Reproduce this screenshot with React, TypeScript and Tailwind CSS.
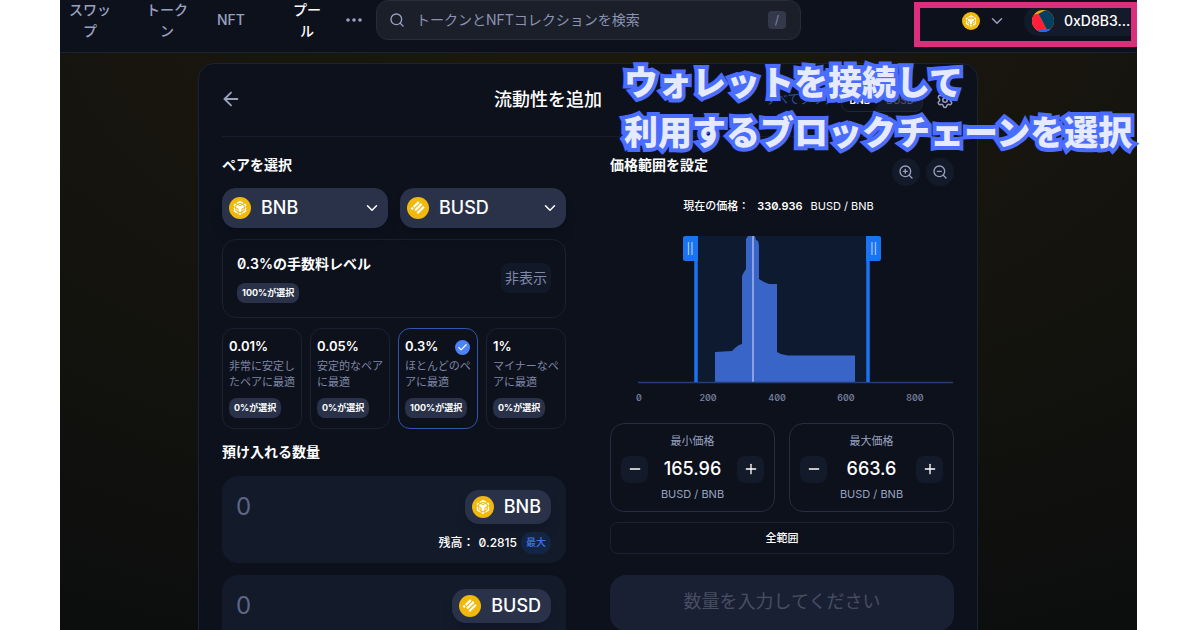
import type { ReactNode } from "react";
import { ArrowLeft, Check, ChevronDown, Minus, Plus, Search, Settings, ZoomIn, ZoomOut } from "lucide-react";

type Token = "BNB" | "BUSD";

const feeTiers = [
  { rate: "0.01%", note: "非常に安定したペアに最適", share: "0%が選択", selected: false },
  { rate: "0.05%", note: "安定的なペアに最適", share: "0%が選択", selected: false },
  { rate: "0.3%", note: "ほとんどのペアに最適", share: "100%が選択", selected: true },
  { rate: "1%", note: "マイナーなペアに最適", share: "0%が選択", selected: false },
];

function TokenIcon({ token, className }: { token: Token; className: string }) {
  return (
    <svg viewBox="0 0 24 24" className={className} aria-hidden="true">
      <circle cx="12" cy="12" r="12" fill="#f0b90b" />
      {token === "BNB" ? (
        <path
          transform="translate(4.2 4.2) scale(0.65)"
          fill="#fff"
          d="M5.631 3.676 12.001 0l6.367 3.676-2.34 1.358L12 2.716 7.972 5.034l-2.34-1.358Zm12.737 4.636-2.34-1.358L12 9.272 7.972 6.954l-2.34 1.358v2.716l4.026 2.318v4.636L12 19.341l2.341-1.359v-4.636l4.027-2.318V8.312Zm0 7.352v-2.716l-2.34 1.358v2.716l2.34-1.358Zm1.663.96-4.027 2.318v2.717l6.368-3.677V10.63l-2.34 1.358v4.636Zm-2.34-10.63 2.34 1.358v2.716l2.341-1.358V5.994l-2.34-1.358-2.342 1.358ZM9.657 19.926v2.716L12 24l2.341-1.358v-2.716l-2.34 1.358-2.342-1.358Zm-4.027-4.262 2.341 1.358v-2.716l-2.34-1.358v2.716Zm4.027-9.67L12 7.352l2.341-1.358L12 4.636 9.658 5.994Zm-5.69 1.358L6.31 5.994 3.968 4.636l-2.34 1.358V8.71l2.34 1.358V7.352Zm0 4.636L1.627 10.63v7.352l6.368 3.677v-2.717L3.969 16.624v-4.636Z"
        />
      ) : (
        <g stroke="#fff" strokeWidth="2.4">
          <path d="M7.200 11 12.900 5.400M8.700 14.700l7.300-7.200M11.200 17.800l7.300-7.200" />
          <path d="M4.800 11.600l1.700 1.700" />
        </g>
      )}
    </svg>
  );
}

function Badge({ children }: { children: ReactNode }) {
  return (
    <span className="inline-block rounded-lg bg-[#293249] px-[5px] text-[9px] leading-5 font-bold whitespace-nowrap text-white">
      {children}
    </span>
  );
}

function TokenSelect({ token, label }: { token: Token; label: string }) {
  return (
    <label className="flex h-10 min-w-0 flex-1 items-center rounded-[14px] bg-[#293249] pr-[6px] pl-[7px] shadow-lg">
      <TokenIcon token={token} className="mr-[10px] size-[22px] shrink-0" />
      <select
        aria-label={label}
        defaultValue={token}
        className="min-w-0 flex-1 appearance-none bg-transparent text-lg font-medium text-white outline-none"
      >
        <option>BNB</option>
        <option>BUSD</option>
      </select>
      <ChevronDown className="mr-[1px] size-[18px] shrink-0 text-white" strokeWidth={2} />
    </label>
  );
}

function DepositBox({ token, balance }: { token: Token; balance: string }) {
  return (
    <div className="h-[87px] rounded-2xl bg-[#131a2a] pt-[14px] pr-[15px] pl-[14px]">
      <div className="flex items-center justify-between">
        <input
          aria-label={`${token}の数量`}
          placeholder="0"
          className="w-32 bg-transparent text-2xl font-normal text-white outline-none placeholder:text-[#5d6785]"
        />
        <button className="flex h-[34px] items-center rounded-[14px] bg-[#293249] pr-[10px] pl-[7px] text-lg font-medium text-white shadow-lg">
          <TokenIcon token={token} className="mr-[10px] size-[22px]" />
          {token}
        </button>
      </div>
      <div className="mt-2 flex items-center justify-end text-xs font-medium text-white">
        <span className="mr-1">残高：</span>
        <span className="mr-1 slashed-zero">{balance}</span>
        <button className="h-[22px] rounded-[11px] bg-[#122644] px-[5px] text-[10px] font-medium text-[#3f72e4]">最大</button>
      </div>
    </div>
  );
}

function PriceBox({ title, value }: { title: string; value: string }) {
  const step = "flex size-[27px] items-center justify-center rounded-lg bg-[#131a2a] text-white";
  return (
    <div className="flex h-[89px] flex-1 flex-col rounded-[14px] border border-[#262c42] px-[10px] pt-[9px] text-center text-[11px] leading-4 text-[#98a1c0]">
      <span>{title}</span>
      <div className="mt-[6px] mb-[3px] flex items-center justify-between">
        <button aria-label={`${title}を下げる`} className={step}>
          <Minus className="size-4" strokeWidth={2} />
        </button>
        <input
          aria-label={title}
          defaultValue={value}
          className="w-20 bg-transparent text-center text-lg font-medium text-white outline-none"
        />
        <button aria-label={`${title}を上げる`} className={step}>
          <Plus className="size-4" strokeWidth={2} />
        </button>
      </div>
      <span>BUSD / BNB</span>
    </div>
  );
}

function LiquidityChart() {
  const ticks = [
    { x: 1, label: "0" },
    { x: 70, label: "200" },
    { x: 139, label: "400" },
    { x: 208, label: "600" },
    { x: 277, label: "800" },
  ];
  return (
    <svg viewBox="0 0 316 170" className="ml-auto block w-[316px] overflow-visible" role="img" aria-label="流動性の分布">
      <rect x="58" y="0" width="172" height="146" fill="#0e1a30" />
      <path
        d="M77 146V116L94 115 97 112 101 109 104 108V40L106 36 108 33V3L110 0H117L118 4 120 5 121 9V43L126 46 131 48H139V116L143 118 150 119.5H217V146Z"
        fill="#3965c8"
      />
      <path d="M115 0V146" stroke="#8aa2e0" strokeWidth="2" />
      <path d="M0 146.500H315" stroke="#233f7a" strokeWidth="1.5" />
      <path d="M58 0V146M230 0V146" stroke="#1a73f0" strokeWidth="3.5" />
      <path d="M47 0H60V25H47Q45 25 45 23V2Q45 0 47 0ZM228 0H241Q243 0 243 2V23Q243 25 241 25H228Z" fill="#1a73f0" />
      <path d="M50.500 6V19M54 6V19M234 6V19M237.500 6V19" stroke="#9cc1fa" strokeWidth="1.3" />
      {ticks.map((t) => (
        <text key={t.label} x={t.x} y="165" textAnchor="middle" className="fill-[#7c85a3] text-[9px] font-medium slashed-zero">
          {t.label}
        </text>
      ))}
    </svg>
  );
}

function Header() {
  const item = "shrink-0 text-center";
  return (
    <header className="relative flex h-[53px] items-center overflow-hidden border-b border-[#1b2236] bg-[#0d111c] pb-[13px] pl-[9px]">
      <nav className="flex items-center text-sm leading-[21px] font-medium text-[#98a1c0]">
        <a href="#swap" className={`${item} mr-[35px] w-[42px]`}>スワップ</a>
        <a href="#tokens" className={`${item} mr-[22px] w-[42px]`}>トークン</a>
        <a href="#nft" className={`${item} mr-[41px] w-[42px]`}>NFT</a>
        <a href="#pool" className={`${item} mr-[25px] w-7 text-white`}>プール</a>
        <button aria-label="その他" className="mr-[14px]">
          <svg viewBox="0 0 16 4" className="w-4" fill="currentColor">
            <circle cx="2" cy="2" r="1.8" />
            <circle cx="8" cy="2" r="1.8" />
            <circle cx="14" cy="2" r="1.8" />
          </svg>
        </button>
      </nav>
      <label className="flex h-10 w-[425px] items-center rounded-xl border border-[#262c3a] bg-[#1b1f2a] pr-[14px] pl-3">
        <Search className="mr-[11px] size-4 shrink-0 text-[#98a1c0]" strokeWidth={2} />
        <input
          aria-label="検索"
          placeholder="トークンとNFTコレクションを検索"
          className="min-w-0 flex-1 bg-transparent text-sm text-white outline-none placeholder:text-[#8a93b2]"
        />
        <kbd className="flex h-[18px] w-[18px] items-center justify-center rounded bg-[#33384a] font-[inherit] text-xs text-[#7f88a6]">/</kbd>
      </label>
      <div className="ml-auto flex items-center pt-[2px]">
        <button aria-label="チェーンを選択" className="mr-[18px] flex items-center gap-2 text-[#98a1c0]">
          <TokenIcon token="BNB" className="size-[18px]" />
          <ChevronDown className="size-[18px]" strokeWidth={2} />
        </button>
        <button className="flex h-[30px] w-[113px] items-center gap-[10px] rounded-l-full bg-[#131a2a] pl-[8px] text-sm font-medium text-white">
          <svg viewBox="0 0 22 22" className="size-[22px] rounded-full">
            <rect width="22" height="22" fill="#f5a60b" />
            <path d="M0 5 6.500 3.800 15 20V22H0Z" fill="#ff1f3a" />
            <path d="M6.500 3.800 14 0H22V18L15 20Z" fill="#033f5e" />
            <path d="M5 20.500 22 18.500V22H5Z" fill="#1d6cf0" />
          </svg>
          0xD8B3...
        </button>
      </div>
      <div className="pointer-events-none absolute top-[2px] right-0 h-[45px] w-[223px] border-[6px] border-[#db2f7e]" />
    </header>
  );
}

export default function App() {
  return (
    <div className="h-screen overflow-hidden bg-white pr-[63px] pl-[60px] font-['Inter','Noto_Sans_CJK_JP',sans-serif]">
      <div className="relative flex h-full flex-col bg-[radial-gradient(ellipse_110%_110%_at_top,#1d190d_0%,#15140e_50%,#0c0e0e_100%)]">
        <Header />
        <main className="min-h-0 flex-1 overflow-hidden pt-[10px] pr-[159px] pl-[138px]">
          <section className="rounded-2xl border border-[#1c2232] bg-[#0d111c] px-[23px] pb-10">
            <div className="flex h-[73px] items-center border-b border-[#161c2b]">
              <div className="flex flex-1 pb-[3px]">
                <button aria-label="戻る" className="-ml-[2px] text-[#98a1c0]">
                  <ArrowLeft className="size-[22px]" strokeWidth={2} />
                </button>
              </div>
              <h1 className="text-lg font-medium text-white">流動性を追加</h1>
              <div className="flex flex-1 items-center justify-end pl-20 whitespace-nowrap">
                <button className="mr-[5px] text-xs text-[#2453a4]">すべてクリア</button>
                <div className="mr-[13px] flex h-6 items-center rounded-lg border border-[#1e263a] bg-[#131a2a] text-[10px]">
                  <button className="h-full rounded-lg bg-[#0d111c] px-2 font-semibold text-white">BNB</button>
                  <button className="px-2 font-medium text-[#4a5470]">BUSD</button>
                </div>
                <button aria-label="設定" className="text-[#98a1c0]">
                  <Settings className="size-[18px]" strokeWidth={2} />
                </button>
              </div>
            </div>

            <div className="grid grid-cols-2 gap-11 pt-[17px]">
              <div>
                <h2 className="text-sm leading-[22px] font-bold text-white">ペアを選択</h2>
                <div className="mt-[12px] flex gap-3">
                  <TokenSelect token="BNB" label="トークン1" />
                  <TokenSelect token="BUSD" label="トークン2" />
                </div>

                <div className="mt-[11px] flex h-[79px] items-center justify-between rounded-[14px] border border-[#1b2133] px-[14px] pb-[2px]">
                  <div>
                    <p className="mb-2 text-sm leading-[22px] font-semibold text-white slashed-zero">0.3%の手数料レベル</p>
                    <div className="flex">
                      <Badge>100%が選択</Badge>
                    </div>
                  </div>
                  <button className="h-[30px] rounded-lg bg-[#111827] px-1 text-sm text-[#8089a8]">非表示</button>
                </div>

                <div className="mt-[10px] grid grid-cols-4 gap-2">
                  {feeTiers.map((tier) => (
                    <button
                      key={tier.rate}
                      aria-pressed={tier.selected}
                      className={`flex h-[101px] flex-col items-start rounded-xl border pt-[9px] pr-1 pl-1.5 text-left ${
                        tier.selected ? "border-[#2f56ab]" : "border-[#1b2133]"
                      }`}
                    >
                      <span className="flex h-[18px] w-full items-center justify-between pr-[3px] text-[13px] font-semibold text-white">
                        {tier.rate}
                        {tier.selected && (
                          <span className="flex size-[15px] items-center justify-center rounded-full bg-[#4c82fb]">
                            <Check className="size-[11px]" strokeWidth={2.5} />
                          </span>
                        )}
                      </span>
                      <span className="mt-[2px] mb-2 text-[11px] leading-4 text-[#7d86a5]">{tier.note}</span>
                      <Badge>{tier.share}</Badge>
                    </button>
                  ))}
                </div>

                <h2 className="mt-[12px] mb-[13px] text-sm leading-[22px] font-bold text-white">預け入れる数量</h2>
                <div className="flex flex-col gap-3">
                  <DepositBox token="BNB" balance="0.2815" />
                  <DepositBox token="BUSD" balance="0" />
                </div>
              </div>

              <div>
                <div className="flex h-[34px] items-start justify-between">
                  <h2 className="text-sm leading-[22px] font-bold text-white">価格範囲を設定</h2>
                  <div className="flex gap-[6px] pt-[4px]">
                    <button aria-label="拡大" className="flex size-7 items-center justify-center rounded-full bg-[#131a2a] text-[#98a1c0]">
                      <ZoomIn className="size-4" strokeWidth={2} />
                    </button>
                    <button aria-label="縮小" className="flex size-7 items-center justify-center rounded-full bg-[#131a2a] text-[#98a1c0]">
                      <ZoomOut className="size-4" strokeWidth={2} />
                    </button>
                  </div>
                </div>
                <p className="mt-[10px] flex justify-center pr-[7px] text-[11px] leading-4 font-medium text-white">
                  <span>現在の価格：</span>
                  <span className="mx-2 font-semibold slashed-zero">330.936</span>
                  <span className="font-normal">BUSD / BNB</span>
                </p>
                <div className="mt-[22px]">
                  <LiquidityChart />
                </div>
                <div className="mt-[17px] flex gap-[14px]">
                  <PriceBox title="最小価格" value="165.96" />
                  <PriceBox title="最大価格" value="663.6" />
                </div>
                <button className="mt-[10px] h-8 w-full rounded-lg border border-[#1b2133] text-[11px] font-medium text-white">全範囲</button>
                <button disabled className="mt-[21px] h-14 w-full rounded-2xl bg-[#1a2033] pb-[2px] text-lg text-[#484e62]">
                  数量を入力してください
                </button>
              </div>
            </div>
          </section>
        </main>
        <p className="pointer-events-none absolute top-[58px] right-[3px] w-[510px] text-[34px] leading-[50px] font-black whitespace-nowrap text-[#e6eaff] [-webkit-text-stroke:8px_#4a6cff] [paint-order:stroke_fill]">
          ウォレットを接続して
          <br />
          利用するブロックチェーンを選択
        </p>
      </div>
    </div>
  );
}
